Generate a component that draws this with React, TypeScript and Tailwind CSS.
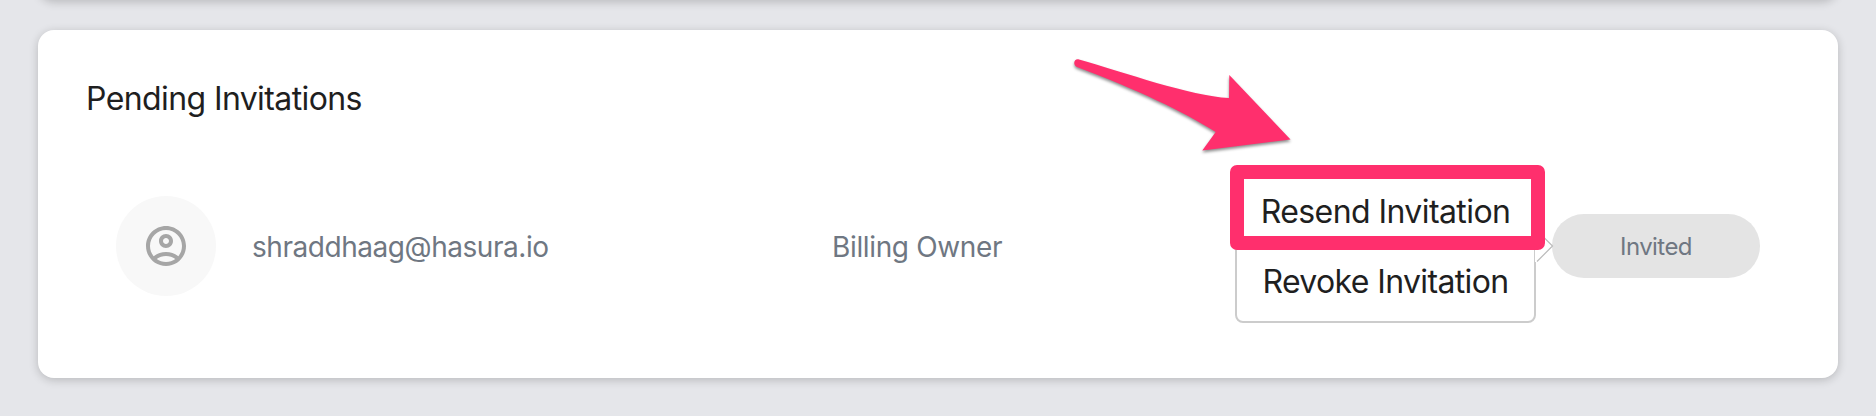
function AccountIcon() {
  return (
    <svg viewBox="0 0 24 24" className="size-12" fill="#a6a6a6" aria-hidden="true">
      <path d="M12 2C6.48 2 2 6.48 2 12s4.48 10 10 10 10-4.480 10-10S17.520 2 12 2zM7.350 18.500C8.660 17.560 10.260 17 12 17s3.340.56 4.650 1.500C15.340 19.440 13.740 20 12 20s-3.340-.56-4.650-1.500zm10.790-1.380C16.450 15.800 14.320 15 12 15s-4.450.8-6.140 2.120C4.700 15.730 4 13.950 4 12c0-4.420 3.580-8 8-8s8 3.580 8 8c0 1.950-.7 3.730-1.860 5.120z" />
      <path d="M12 6c-1.930 0-3.500 1.570-3.500 3.500S10.070 13 12 13s3.500-1.570 3.500-3.500S13.930 6 12 6zm0 5c-.83 0-1.500-.67-1.500-1.500S11.170 8 12 8s1.500.67 1.500 1.500S12.830 11 12 11z" />
    </svg>
  );
}

function InvitationMenu() {
  return (
    <div className="absolute -left-[317px] -top-[45px] h-[154px] w-[301px] rounded-lg border-2 border-[#ccc] bg-white text-[32px] leading-10 text-[#1f1f1f]">
      <div className="flex h-full flex-col items-center pt-[21px]">
        <button className="whitespace-nowrap tracking-[-0.58px]">Resend Invitation</button>
        <button className="mt-[30px] whitespace-nowrap tracking-[-0.63px]">Revoke Invitation</button>
      </div>
      <svg className="absolute left-[298px] top-[58px] h-[34px] w-5" viewBox="0 0 20 34" aria-hidden="true">
        <path d="M0 1H2V33H0Z" fill="#fff" />
        <path d="M2 1.500L17.500 17L2 32.500" fill="#fff" stroke="#bbb" strokeWidth="1.200" />
      </svg>
      <div className="absolute -left-[7.500px] -top-[6px] h-[85px] w-[315px] rounded-[7px] border-[14px] border-[#ff2f6d]" />
    </div>
  );
}

function PointerArrow() {
  return (
    <svg
      className="absolute left-[1060px] top-[50px] h-[115px] w-[245px]"
      viewBox="1060 50 245 115"
      style={{ filter: "drop-shadow(0 2px 1.5px rgba(0,0,0,.45))" }}
      aria-hidden="true"
    >
      <path
        d="M1079 59.500C1125 72.500 1190 96 1229 98L1229.300 75L1290.500 139.400L1202.300 150.400L1215.700 132C1182 111 1140 91 1077 67C1072 64.500 1074.500 58 1079 59.500Z"
        fill="#ff2f6d"
      />
    </svg>
  );
}

export default function App() {
  return (
    <div className="relative h-[416px] w-[1876px] overflow-hidden bg-[#e5e6ea] px-[38px] font-['Inter','Liberation_Sans',sans-serif]">
      <div className="-mt-10 h-10 rounded-2xl bg-white shadow-[0_2px_10px_rgba(0,0,0,0.2)]" />
      <section className="mt-[30px] h-[348px] rounded-2xl bg-white px-12 pt-[49px] shadow-[0_2px_10px_rgba(0,0,0,0.2)]">
        <h2 className="text-[32px] leading-10 tracking-[-0.6px] text-[#1f1f1f]">Pending Invitations</h2>
        <div className="mt-[77px] flex h-[100px] items-center pl-[30px] text-[28px] text-[#6f7782]">
          <div className="flex size-[100px] items-center justify-center rounded-full bg-[#f8f8f8]">
            <AccountIcon />
          </div>
          <div className="w-[580px] pl-9 pt-0.5 tracking-[-0.45px]">shraddhaag@hasura.io</div>
          <div className="w-[756px] pl-9 pt-0.5 tracking-[-0.36px]">Billing Owner</div>
          <div className="relative h-16 w-[208px] shrink-0 rounded-full bg-[#e4e4e4]">
            <div className="flex h-full items-center justify-center pt-0.5 text-2xl tracking-[-0.55px]">Invited</div>
            <InvitationMenu />
          </div>
        </div>
      </section>
      <PointerArrow />
    </div>
  );
}
